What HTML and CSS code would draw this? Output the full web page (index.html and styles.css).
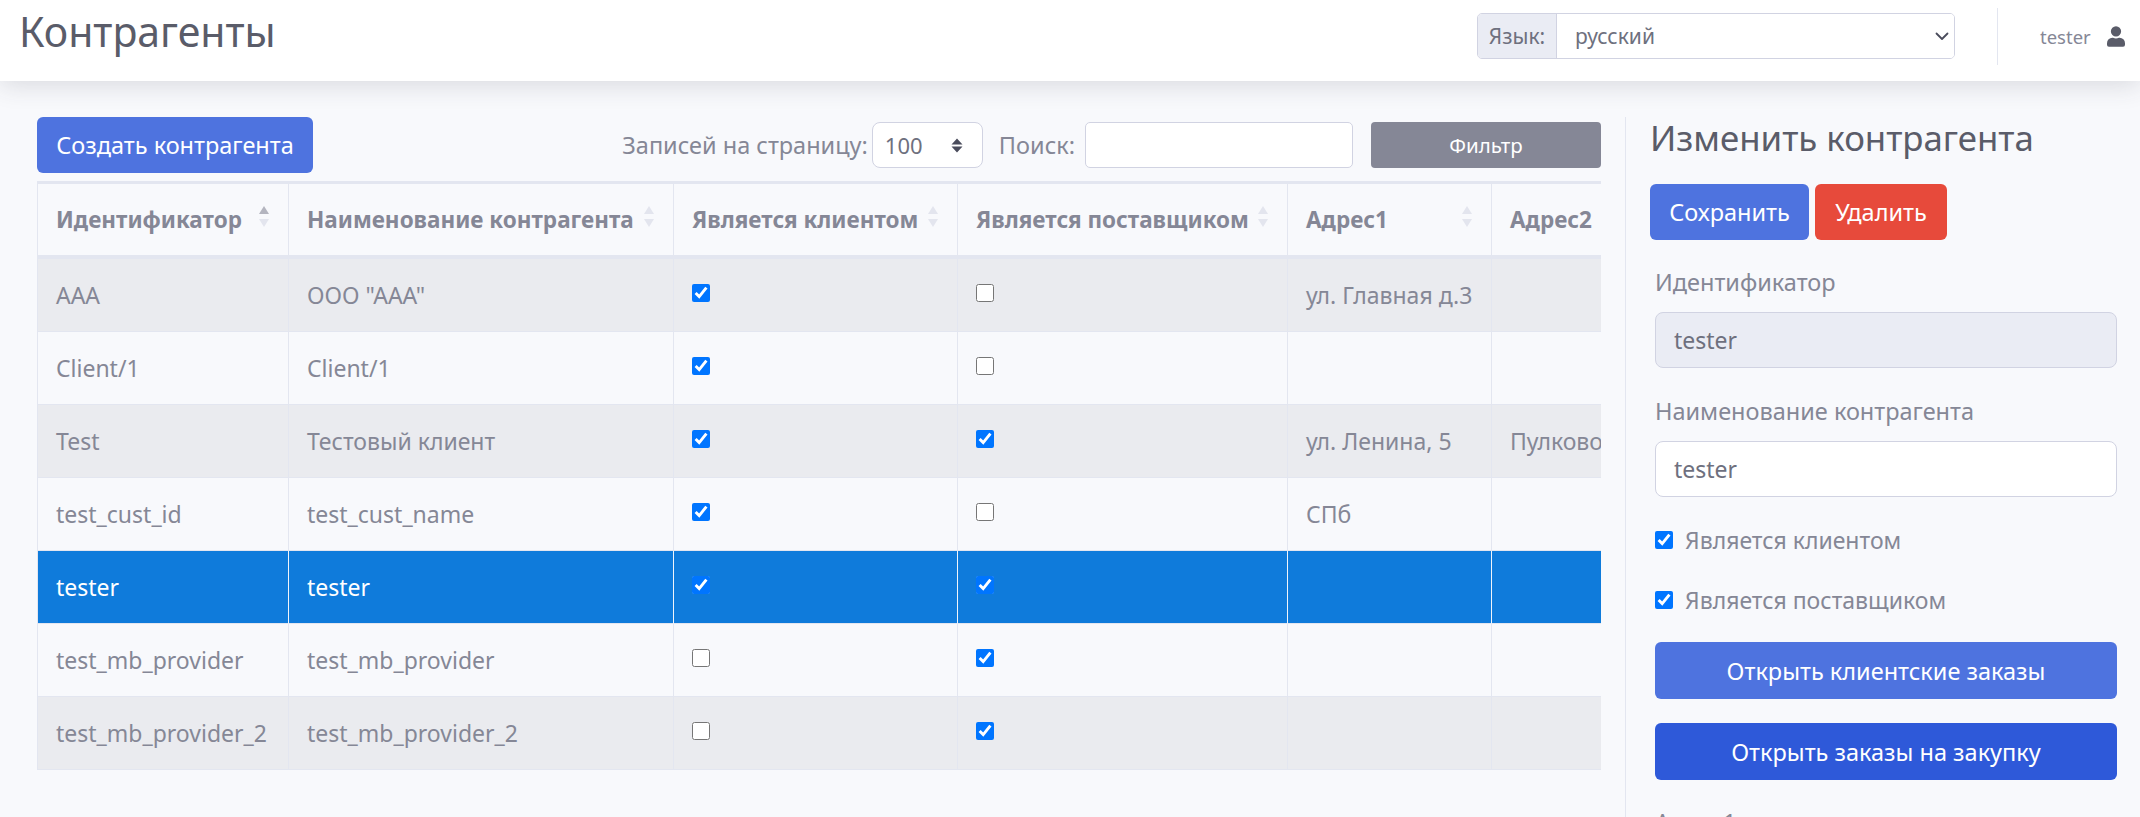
FILE: index.html
```html
<!DOCTYPE html>
<html lang="ru">
<head>
<meta charset="utf-8">
<title>Контрагенты</title>
<link rel="stylesheet" href="styles.css">
</head>
<body>
<header class="topbar">
  <h1 class="page-title">Контрагенты</h1>
  <div class="top-right">
    <div class="lang-group">
      <span class="lang-label">Язык:</span>
      <div class="lang-select">
        <span>русский</span>
        <svg class="chev" viewBox="0 0 16 16" width="16" height="16"><path d="M2.500 5.500 8 11l5.500-5.500" fill="none" stroke="#4a4c5c" stroke-width="1.800" stroke-linecap="round" stroke-linejoin="round"/></svg>
      </div>
    </div>
    <div class="user">
      <span class="user-name">tester</span>
      <svg class="user-icon" viewBox="0 0 448 512" width="18" height="21"><path fill="#5a5c69" d="M224 256a128 128 0 1 0 0-256 128 128 0 0 0 0 256zm89.600 32h-16.700a174.100 174.100 0 0 1-145.800 0h-16.700A134.400 134.400 0 0 0 0 422.400V464a48 48 0 0 0 48 48h352a48 48 0 0 0 48-48v-41.600A134.400 134.400 0 0 0 313.600 288z"/></svg>
    </div>
  </div>
</header>
<main class="content">
  <section class="list">
    <div class="toolbar">
      <button class="btn btn-primary btn-create">Создать контрагента</button>
      <div class="tools">
        <span class="tool-label">Записей на страницу:</span>
        <div class="per-page"><span>100</span>
          <svg viewBox="0 0 12 15" width="12" height="15"><path fill="#4a4c5c" d="M6 0.500 11.500 6.500H0.500zM6 14.500 0.500 8.500h11z"/></svg>
        </div>
        <span class="tool-label search-label">Поиск:</span>
        <div class="search-box"></div>
        <button class="btn btn-filter">Фильтр</button>
      </div>
    </div>
    <div class="table-wrap">
      <table class="grid">
        <colgroup>
          <col class="c1"><col class="c2"><col class="c3"><col class="c4"><col class="c5"><col class="c6">
        </colgroup>
        <thead>
          <tr>
            <th><div class="th-in"><span>Идентификатор</span><i class="sort asc"></i></div></th>
            <th><div class="th-in"><span>Наименование контрагента</span><i class="sort"></i></div></th>
            <th><div class="th-in"><span>Является клиентом</span><i class="sort"></i></div></th>
            <th><div class="th-in"><span>Является поставщиком</span><i class="sort"></i></div></th>
            <th><div class="th-in"><span>Адрес1</span><i class="sort"></i></div></th>
            <th><div class="th-in"><span>Адрес2</span><i class="sort"></i></div></th>
          </tr>
        </thead>
        <tbody>
          <tr class="odd"><td>ААА</td><td>ООО "ААА"</td><td><input type="checkbox" checked></td><td><input type="checkbox"></td><td>ул. Главная д.3</td><td></td></tr>
          <tr><td>Client/1</td><td>Client/1</td><td><input type="checkbox" checked></td><td><input type="checkbox"></td><td></td><td></td></tr>
          <tr class="odd"><td>Test</td><td>Тестовый клиент</td><td><input type="checkbox" checked></td><td><input type="checkbox" checked></td><td>ул. Ленина, 5</td><td>Пулково</td></tr>
          <tr><td>test_cust_id</td><td>test_cust_name</td><td><input type="checkbox" checked></td><td><input type="checkbox"></td><td>СПб</td><td></td></tr>
          <tr class="selected"><td>tester</td><td>tester</td><td><input type="checkbox" checked></td><td><input type="checkbox" checked></td><td></td><td></td></tr>
          <tr><td>test_mb_provider</td><td>test_mb_provider</td><td><input type="checkbox"></td><td><input type="checkbox" checked></td><td></td><td></td></tr>
          <tr class="odd"><td>test_mb_provider_2</td><td>test_mb_provider_2</td><td><input type="checkbox"></td><td><input type="checkbox" checked></td><td></td><td></td></tr>
        </tbody>
      </table>
    </div>
  </section>
  <aside class="editor">
    <h2 class="editor-title">Изменить контрагента</h2>
    <div class="editor-actions">
      <button class="btn btn-primary btn-save">Сохранить</button>
      <button class="btn btn-danger">Удалить</button>
    </div>
    <form class="form">
      <label class="field-label">Идентификатор</label>
      <div class="field field-disabled">tester</div>
      <label class="field-label field-label-2">Наименование контрагента</label>
      <div class="field">tester</div>
      <label class="check check-first"><input type="checkbox" checked><span>Является клиентом</span></label>
      <label class="check"><input type="checkbox" checked><span>Является поставщиком</span></label>
      <button type="button" class="btn btn-wide btn-orders">Открыть клиентские заказы</button>
      <button type="button" class="btn btn-wide btn-purchase">Открыть заказы на закупку</button>
      <label class="field-label field-label-last">Адрес1</label>
    </form>
  </aside>
</main>
</body>
</html>
```
FILE: styles.css
```css
* { box-sizing: border-box; }
html, body { height: 100%; }
body {
  margin: 0;
  height: 817px;
  overflow: hidden;
  background: #f8f9fc;
  color: #858796;
  font-family: "Noto Sans", "Open Sans", sans-serif;
  font-size: 23px;
}
.topbar {
  height: 81px;
  background: #fff;
  display: flex;
  justify-content: space-between;
  box-shadow: 0 4px 24px rgba(58, 59, 69, 0.16);
  position: relative;
  padding-left: 19px;
}
.page-title {
  margin: 7px 0 0;
  font-size: 41px;
  font-weight: 400;
  line-height: 48px;
  color: #5a5c69;
}
.top-right { display: flex; align-items: flex-start; }
.lang-group {
  margin-top: 13px;
  width: 478px;
  height: 46px;
  display: flex;
  border: 1px solid #d1d3e2;
  border-radius: 5px;
  font-size: 21px;
  margin-right: 42px;
}
.lang-label {
  width: 79px;
  background: #eaecf4;
  border-right: 1px solid #d1d3e2;
  border-radius: 4px 0 0 4px;
  display: flex;
  align-items: center;
  justify-content: center;
  color: #6e707e;
}
.lang-select {
  flex: 1;
  background: #fff;
  border-radius: 0 4px 4px 0;
  display: flex;
  align-items: center;
  justify-content: space-between;
  padding: 0 4px 0 18px;
  color: #6e707e;
}
.user {
  margin-top: 8px;
  width: 143px;
  height: 57px;
  border-left: 1px solid #e3e6f0;
  padding-left: 42px;
  display: flex;
  align-items: center;
  gap: 16px;
  font-size: 18.500px;
}
.content {
  display: flex;
  padding: 36px 0 0 37px;
  height: 736px;
  overflow: hidden;
}
.list { width: 1564px; flex: none; }
.toolbar {
  display: flex;
  justify-content: space-between;
  height: 65px;
}
.btn {
  border: 0;
  border-radius: 6px;
  font-family: inherit;
  color: #fff;
  font-size: 23.500px;
  padding: 0;
}
.btn-primary { background: #4e73df; }
.btn-create { width: 276px; height: 56px; }
.tools { display: flex; align-items: center; height: 46px; margin-top: 5px; font-size: 23.500px; }
.tool-label { white-space: nowrap; }
.per-page {
  width: 111px;
  height: 46px;
  margin-left: 4px;
  background: #fff;
  border: 1px solid #d1d3e2;
  border-radius: 8px;
  display: flex;
  align-items: center;
  justify-content: space-between;
  padding: 0 19px 0 12px;
  font-size: 22px;
  color: #6e707e;
}
.search-label { margin-left: 16px; }
.search-box {
  width: 268px;
  height: 46px;
  margin-left: 10px;
  background: #fff;
  border: 1px solid #d1d3e2;
  border-radius: 5px;
}
.btn-filter {
  width: 230px;
  height: 46px;
  margin-left: 18px;
  background: #858796;
  border-radius: 4px;
  font-size: 20.500px;
}
.table-wrap {
  width: 1564px;
  overflow: hidden;
  border-top: 3px solid #e3e6f0;
  margin-top: -1px;
}
.grid {
  border-collapse: separate;
  border-spacing: 0;
  table-layout: fixed;
  width: 1720px;
  font-size: 23px;
}
.c1 { width: 252px; }
.c2 { width: 385px; }
.c3 { width: 284px; }
.c4 { width: 330px; }
.c5 { width: 204px; }
.c6 { width: 265px; }
.grid th {
  height: 75px;
  padding: 0 0 0 18px;
  text-align: left;
  font-weight: 700;
  font-size: 22.500px;
  border-right: 1px solid #e3e6f0;
  border-bottom: 4px solid #e3e6f0;
}
.grid th:first-child, .grid td:first-child { border-left: 1px solid #e3e6f0; }
.th-in { display: flex; align-items: center; justify-content: space-between; padding-right: 19px; white-space: nowrap; }
.sort { position: relative; display: block; width: 10px; height: 21px; flex: none; margin-top: -6px; }
.sort::before, .sort::after {
  content: "";
  position: absolute;
  left: 0;
  border-left: 5px solid transparent;
  border-right: 5px solid transparent;
}
.sort::before { top: 0; border-bottom: 8px solid #e3e5ee; }
.sort::after { bottom: 0; border-top: 8px solid #e3e5ee; }
.sort.asc::before { border-bottom-color: #b4b5bf; }
.grid td {
  height: 73px;
  padding: 0 0 0 18px;
  border-right: 1px solid #e3e6f0;
  border-bottom: 1px solid #e3e6f0;
  white-space: nowrap;
  overflow: hidden;
}
.grid input { width: 18px; height: 18px; margin: 0; position: relative; top: -2px; accent-color: #0075ff; display: block; }
.odd td { background: #eaebef; }
.selected td { background: #0f7bdb; color: #fff; border-right-color: #f0f4fb; }
.selected td:first-child { border-left-color: #e3e6f0; }
.editor {
  flex: none;
  width: 515px;
  margin-left: 24px;
  height: 736px;
  border-left: 1px solid #e3e6f0;
  padding-left: 24px;
}
.editor-title {
  margin: -2px 0 0;
  font-size: 34.800px;
  font-weight: 400;
  line-height: 46px;
  color: #5a5c69;
}
.editor-actions { display: flex; gap: 6px; margin-top: 23px; }
.editor-actions .btn { height: 56px; }
.btn-save { width: 159px; }
.btn-danger { width: 132px; background: #e74a3b; }
.form { padding: 0 23px 0 5px; display: flex; flex-direction: column; }
.field-label { line-height: 28px; margin-top: 28px; display: block; font-size: 23.500px; }
.field-label-2 { margin-top: 29px; }
.field-label-last { margin-top: 28px; }
.field {
  height: 56px;
  margin-top: 16px;
  background: #fff;
  border: 1px solid #d1d3e2;
  border-radius: 8px;
  padding: 0 18px;
  display: flex;
  align-items: center;
  color: #6e707e;
}
.field-disabled { background: #eaecf4; }
.check { display: flex; align-items: center; gap: 12px; height: 28px; margin-top: 32px; }
.check-first { margin-top: 29px; }
.check input { width: 18px; height: 18px; margin: 0; accent-color: #0075ff; }
.btn-wide { height: 57px; margin-top: 0; }
.btn-orders { background: #4e73df; margin-top: 28px; }
.btn-purchase { background: #2e59d9; margin-top: 24px; }
```
